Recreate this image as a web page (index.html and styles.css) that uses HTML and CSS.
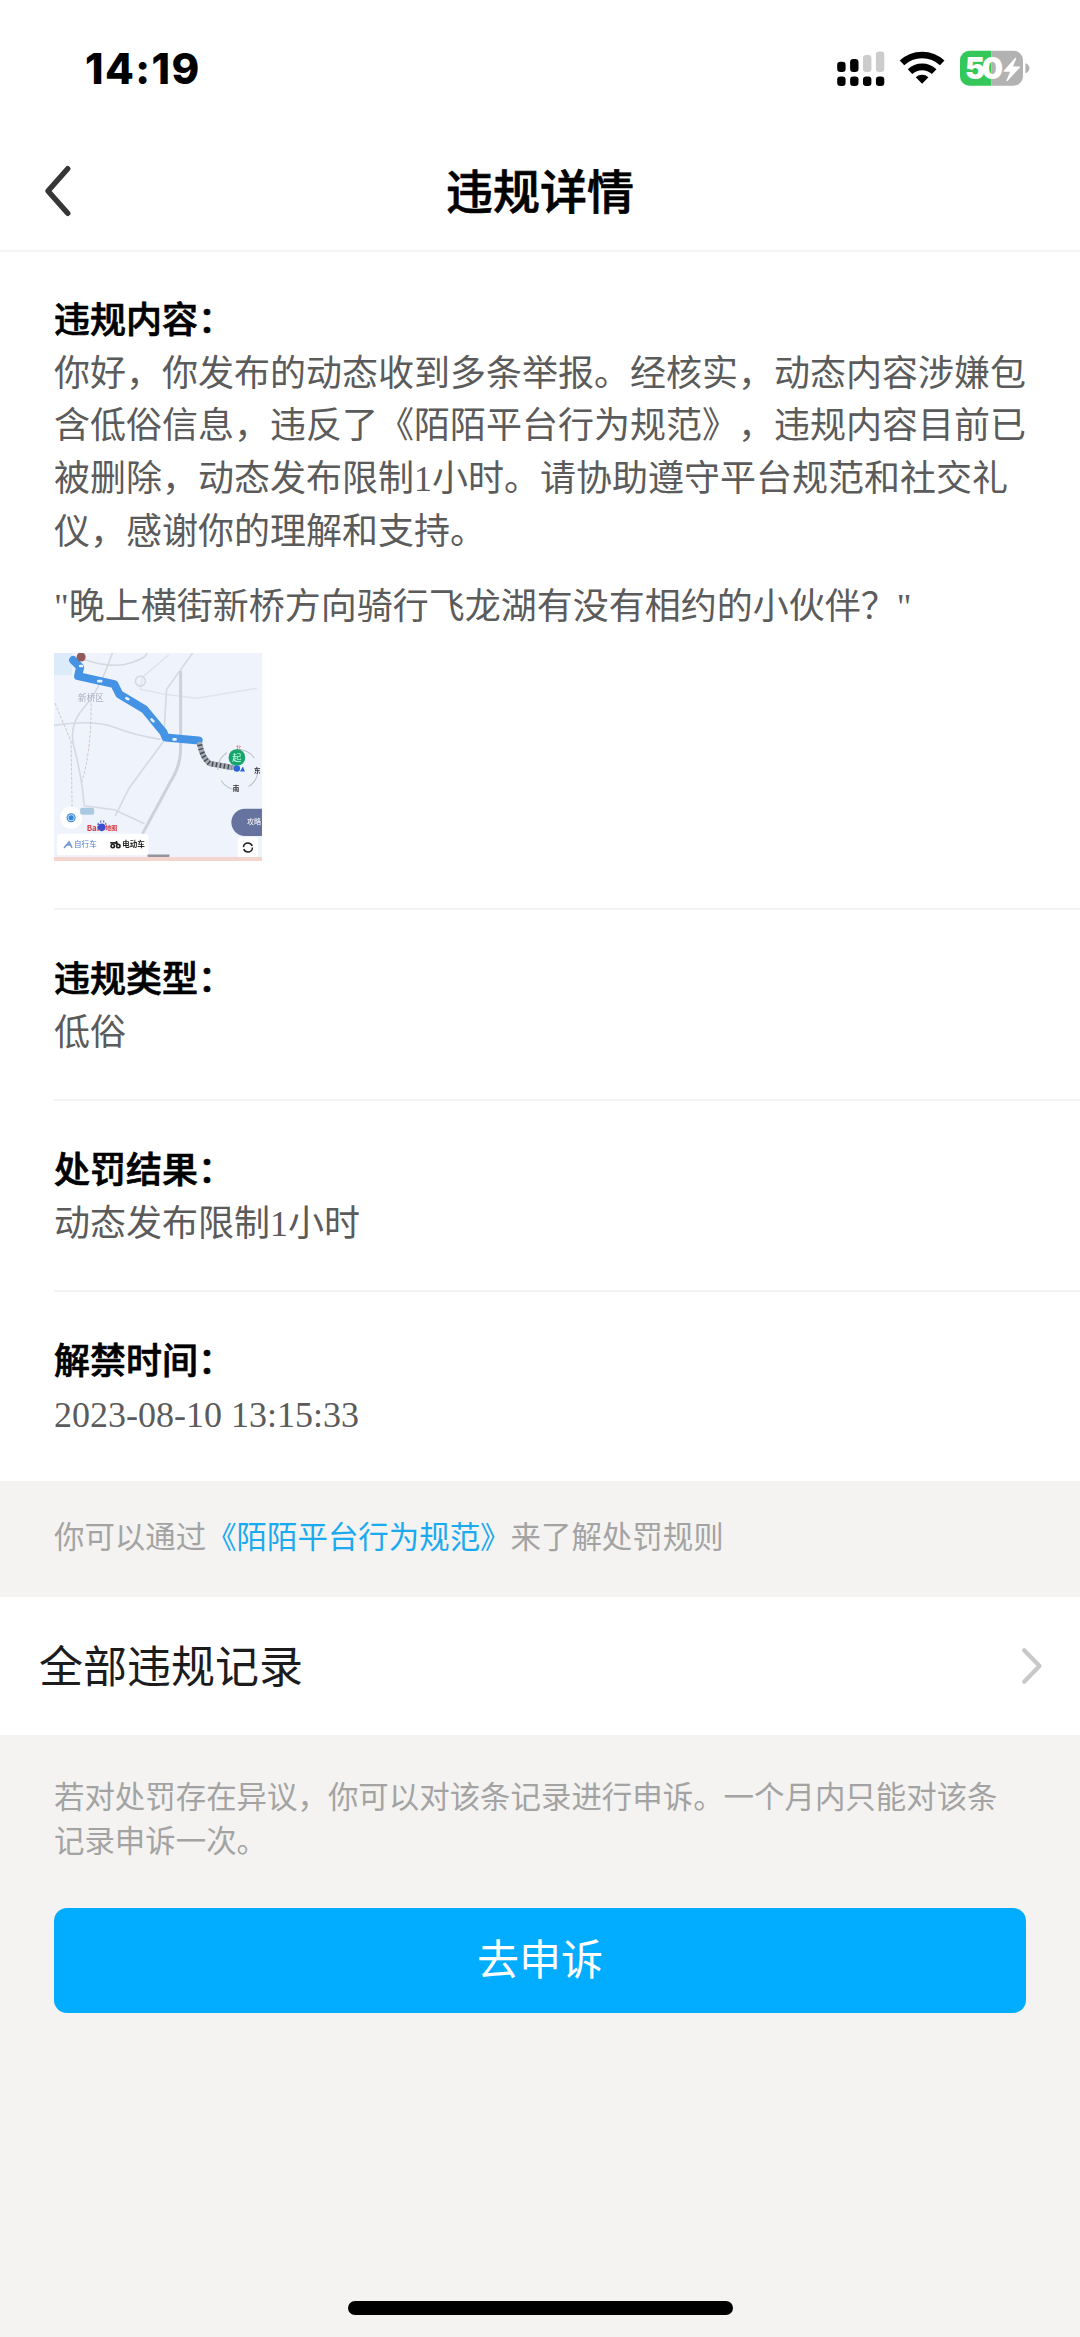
FILE: index.html
```html
<!DOCTYPE html>
<html lang="zh-CN">
<head>
<meta charset="utf-8">
<title>违规详情</title>
<link rel="stylesheet" href="styles.css">
</head>
<body>
<div class="screen">
  <header class="top">
    <div class="status-bar">
      <span class="clock">14:19</span>
      <svg class="status-icons" viewBox="830 45 205 46">
        <g fill="#000">
          <rect x="837.2" y="61.7" width="8.4" height="10.3" rx="3.2"/>
          <rect x="850.1" y="59" width="8.4" height="13" rx="3.2"/>
          <rect x="837.2" y="76.4" width="8.4" height="9.6" rx="3.2"/>
          <rect x="850.1" y="76.4" width="8.4" height="9.6" rx="3.2"/>
          <rect x="863" y="76.4" width="8.4" height="9.6" rx="3.2"/>
          <rect x="875.9" y="76.4" width="8.4" height="9.6" rx="3.2"/>
        </g>
        <g fill="#ccc">
          <rect x="863" y="55" width="8.4" height="17" rx="3.2"/>
          <rect x="875.9" y="51.6" width="8.4" height="20.4" rx="3.2"/>
        </g>
        <g fill="none" stroke="#000" stroke-width="6.6">
          <path d="M902 62.9a29.4 29.4 0 0 1 40.2 0"/>
          <path d="M910 71.6a17.8 17.8 0 0 1 24.2 0"/>
        </g>
        <path fill="#000" d="M922.1 83.8l-6.3-6.6a9.4 9.4 0 0 1 12.6 0z"/>
        <clipPath id="cell"><rect x="960" y="50.7" width="63" height="35" rx="9.5"/></clipPath>
        <g clip-path="url(#cell)">
          <rect x="960" y="50" width="31.2" height="36" fill="#34c759"/>
          <rect x="991.2" y="50" width="32" height="36" fill="#b2b2b2"/>
        </g>
        <path fill="#b2b2b2" d="M1025.4 63.3q4 1.4 4 5t-4 5z"/>
        <text class="battery-level" x="965" y="79.4" textLength="38">50</text>
        <path fill="#fff" stroke="#fff" stroke-width="1.2" stroke-linejoin="round" d="M1015.600 58.300l-11.400 12.800h6.800l-4 9.600 12.500-13.600h-7.300z"/>
      </svg>
    </div>
    <nav class="nav-bar">
      <svg class="back" viewBox="0 0 30 54"><path d="M24.7 4.7L5 27l19.7 22.3"/></svg>
      <h1 class="title">违规详情</h1>
    </nav>
  </header>

  <main>
    <section class="details">
      <article class="item item-content">
        <h2>违规内容：</h2>
        <p>你好，你发布的动态收到多条举报。经核实，动态内容涉嫌包含低俗信息，违反了《陌陌平台行为规范》，违规内容目前已被删除，动态发布限制1小时。请协助遵守平台规范和社交礼仪，感谢你的理解和支持。</p>
        <p class="quote">"晚上横街新桥方向骑行飞龙湖有没有相约的小伙伴？"</p>
        <svg class="map" viewBox="0 0 207 207">
          <rect width="207" height="207" fill="#eff3fc"/>
          <g class="map-detail">
            <path d="M0 0h18v22H0z" fill="#dcebfa"/>
            <g fill="none" stroke="#d5d9e3" stroke-width="1.6">
              <path d="M28 6q30 10 48 4T92 0M58 0q-12 36-28 54T20 94q8 30 10 58"/>
              <path d="M114 2L88 24l-2 12 24 5 32 4 60-10" stroke="#e0e4ed"/>
              <path d="M0 72q40-6 60 2t46 12M138 0l-26 36-3 52-34 46-14 28M30 152l30 4 30 14"/>
              <circle cx="86" cy="28" r="5"/>
            </g>
            <path d="M126 18v78q0 16-10 32l-28 52" fill="none" stroke="#cdd1dd" stroke-width="3"/>
            <path d="M1 50l16 38 1 66M37 50q0 50-10 80" fill="none" stroke="#d3c9ce" stroke-dasharray="3 1.5"/>
            <g fill="none" stroke-linejoin="round" stroke-linecap="round">
              <path d="M19 7l7 7-2 9 36 8 5 10 25 15 19 23 2 5 33 3" stroke="#4493e5" stroke-width="8"/>
              <path d="M26 13h2M44 28h3M72 45l2 1M97 66l2 2M119 86h2" stroke="#e5f2ff" stroke-width="2.600"/>
              <path d="M145 91q3 14 10 19l22 4" stroke="#a0abba" stroke-width="5.500"/>
              <path d="M145 91q3 14 10 19l22 4" stroke="#4d4d50" stroke-width="5" stroke-linecap="butt" stroke-dasharray="1.500 2.500"/>
            </g>
            <circle cx="27" cy="4" r="4.500" fill="#925b5b"/>
            <text x="24" y="48" font-size="8.500" fill="#a6afbf">新桥区</text>
            <circle cx="183" cy="116" r="20" fill="none" stroke="#bbc1cb" stroke-dasharray="20 11"/>
            <text x="181" y="97" font-size="5.500" fill="#e64c58">北</text>
            <circle cx="182" cy="104" r="8.300" fill="#16a66c"/>
            <text x="177.500" y="107.500" font-size="9" fill="#d5fff0">起</text>
            <circle cx="182" cy="115" r="3.200" fill="#2c66d7"/>
            <path d="M185 118l3-5 2 5z" fill="#2c66d7"/>
            <text x="199" y="119" font-size="6.500" font-weight="700" fill="#333">东</text>
            <text x="178" y="137" font-size="6.500" font-weight="700" fill="#333">南</text>
            <circle cx="17" cy="164" r="11" fill="#fff"/>
            <circle cx="17" cy="164" r="4.500" fill="#3587d8"/>
            <circle cx="17" cy="164" r="3" fill="none" stroke="#b9daf7"/>
            <rect x="26" y="154" width="14" height="7" rx="2" fill="#a9cbe0"/>
            <text x="32.500" y="177" font-size="8" font-weight="700" fill="#d63c48">Bai</text>
            <circle cx="47.500" cy="173.500" r="3.800" fill="#3d4ecc"/>
            <path d="M43.500 170h1M46 167.800h1M49 167.800h1M51 170h1" stroke="#3d4ecc" stroke-width="2"/>
            <text x="51" y="176.500" font-size="6" font-weight="700" fill="#d63c48">地图</text>
            <rect y="203" width="207" height="4" fill="#f4d5cd"/>
            <rect x="3" y="180" width="91" height="21" rx="3" fill="#fff"/>
            <path d="M10 194l5-6 3 6M12 191h5" fill="none" stroke="#6d98d6" stroke-width="1.500"/>
            <text x="20" y="193.500" font-size="7.500" fill="#4f81cf">自行车</text>
            <g fill="none" stroke="#222" stroke-width="1.600">
              <circle cx="58.500" cy="192" r="1.700"/><circle cx="64" cy="192" r="1.700"/>
              <path d="M56 189h5l2 1-1-3"/>
            </g>
            <text x="68" y="193.500" font-size="7.500" font-weight="700" fill="#222">电动车</text>
            <path d="M207 155h-17a13.500 13.500 0 0 0 0 27h17z" fill="#66739f"/>
            <text x="192" y="170" font-size="7" fill="#fff">攻略</text>
            <rect x="183" y="183" width="20" height="20" rx="2" fill="#fff"/>
            <circle cx="193" cy="193.500" r="4.500" fill="none" stroke="#222" stroke-width="1.500" stroke-dasharray="12 2.100"/>
            <rect x="93" y="200.500" width="22" height="2.500" rx="1" fill="#94949c"/>
          </g>
        </svg>
      </article>
      <article class="item">
        <h2>违规类型：</h2>
        <p>低俗</p>
      </article>
      <article class="item">
        <h2>处罚结果：</h2>
        <p>动态发布限制1小时</p>
      </article>
      <article class="item">
        <h2>解禁时间：</h2>
        <p>2023-08-10 13:15:33</p>
      </article>
    </section>

    <p class="rules">你可以通过<a class="link">《陌陌平台行为规范》</a>来了解处罚规则</p>

    <div class="records">
      <span>全部违规记录</span>
      <svg class="chevron" viewBox="0 0 22 40"><path d="M3.2 4.2L18.5 20 3.2 35.8"/></svg>
    </div>

    <section class="appeal">
      <p>若对处罚存在异议，你可以对该条记录进行申诉。一个月内只能对该条记录申诉一次。</p>
      <button class="appeal-button">去申诉</button>
    </section>
  </main>
  <div class="home-indicator"></div>
</div>
</body>
</html>
```
FILE: styles.css
```css
* { box-sizing: border-box; }

body {
  margin: 0;
  background: #f4f3f1;
  font-family: "Liberation Serif", "Noto Sans CJK SC", sans-serif;
  text-spacing-trim: space-all;
}

h1, h2, p { margin: 0; }

.screen {
  display: flex;
  flex-direction: column;
  width: 1080px;
  height: 2337px;
}

.top {
  height: 252px;
  background: #fff;
  border-bottom: 2px solid #f4f4f4;
}

.status-bar {
  display: flex;
  justify-content: space-between;
  align-items: center;
  height: 136px;
  padding: 0 45px 0 85px;
}

.clock {
  padding-top: 2px;
  font: 800 42px/50px Inter, sans-serif;
  letter-spacing: 1.4px;
}

.status-icons { width: 205px; height: 46px; }

.battery-level {
  font: 900 30px Inter, sans-serif;
  fill: #fff;
}

.nav-bar {
  display: grid;
  grid-template-columns: 110px 1fr 110px;
  align-items: center;
  height: 110px;
}

.back {
  width: 30px;
  height: 54px;
  margin-left: 43px;
  fill: none;
  stroke: #363636;
  stroke-width: 5.5;
  stroke-linecap: round;
  stroke-linejoin: round;
}

.title {
  padding-top: 3px;
  text-align: center;
  font-size: 47px;
  line-height: 60px;
  font-weight: 500;
  -webkit-text-stroke: 0.7px #000;
}

.details {
  height: 1229px;
  padding-left: 54px;
  background: #fff;
}

.item {
  height: 191px;
  padding: 44px 54px 0 0;
  border-bottom: 2px solid #f2f3f3;
  font-size: 36px;
  line-height: 52.7px;
  color: #5b5b5b;
}

.item:last-child { border-bottom: 0; }

.item h2 {
  font-size: 36px;
  line-height: 52.7px;
  font-weight: 500;
  color: #000;
  -webkit-text-stroke: 0.7px #000;
}

.item-content {
  height: 658px;
  padding-top: 43px;
}

.quote { margin-top: 22px; }

.map {
  display: block;
  width: 208px;
  height: 208px;
  margin-top: 20px;
  font-family: "Noto Sans CJK SC", sans-serif;
}

.map-detail { filter: blur(0.6px); }

.rules {
  height: 116px;
  padding-left: 54px;
  font-size: 30.45px;
  line-height: 114px;
  color: #a3a3a3;
}

.link { color: #1aaaf0; }

.records {
  display: flex;
  justify-content: space-between;
  align-items: center;
  height: 138px;
  padding: 0 37px 0 39px;
  background: #fff;
  font-size: 44px;
  color: #1c1c1c;
}

.records span { padding-bottom: 5px; }

.chevron {
  width: 22px;
  height: 40px;
  fill: none;
  stroke: #c8c8c8;
  stroke-width: 4.2;
  stroke-linecap: round;
  stroke-linejoin: round;
}

.appeal {
  padding: 41px 54px 0;
  font-size: 30.45px;
  line-height: 44.4px;
  color: #a3a3a3;
}

.appeal-button {
  display: block;
  width: 972px;
  height: 105px;
  margin-top: 43px;
  padding: 0;
  border: 0;
  border-radius: 13px;
  background: #02adff;
  color: #fff;
  font-family: inherit;
  font-size: 42px;
  line-height: 107px;
}

.home-indicator {
  width: 385px;
  height: 14px;
  margin: auto auto 22px;
  border-radius: 7px;
  background: #000;
}
```
